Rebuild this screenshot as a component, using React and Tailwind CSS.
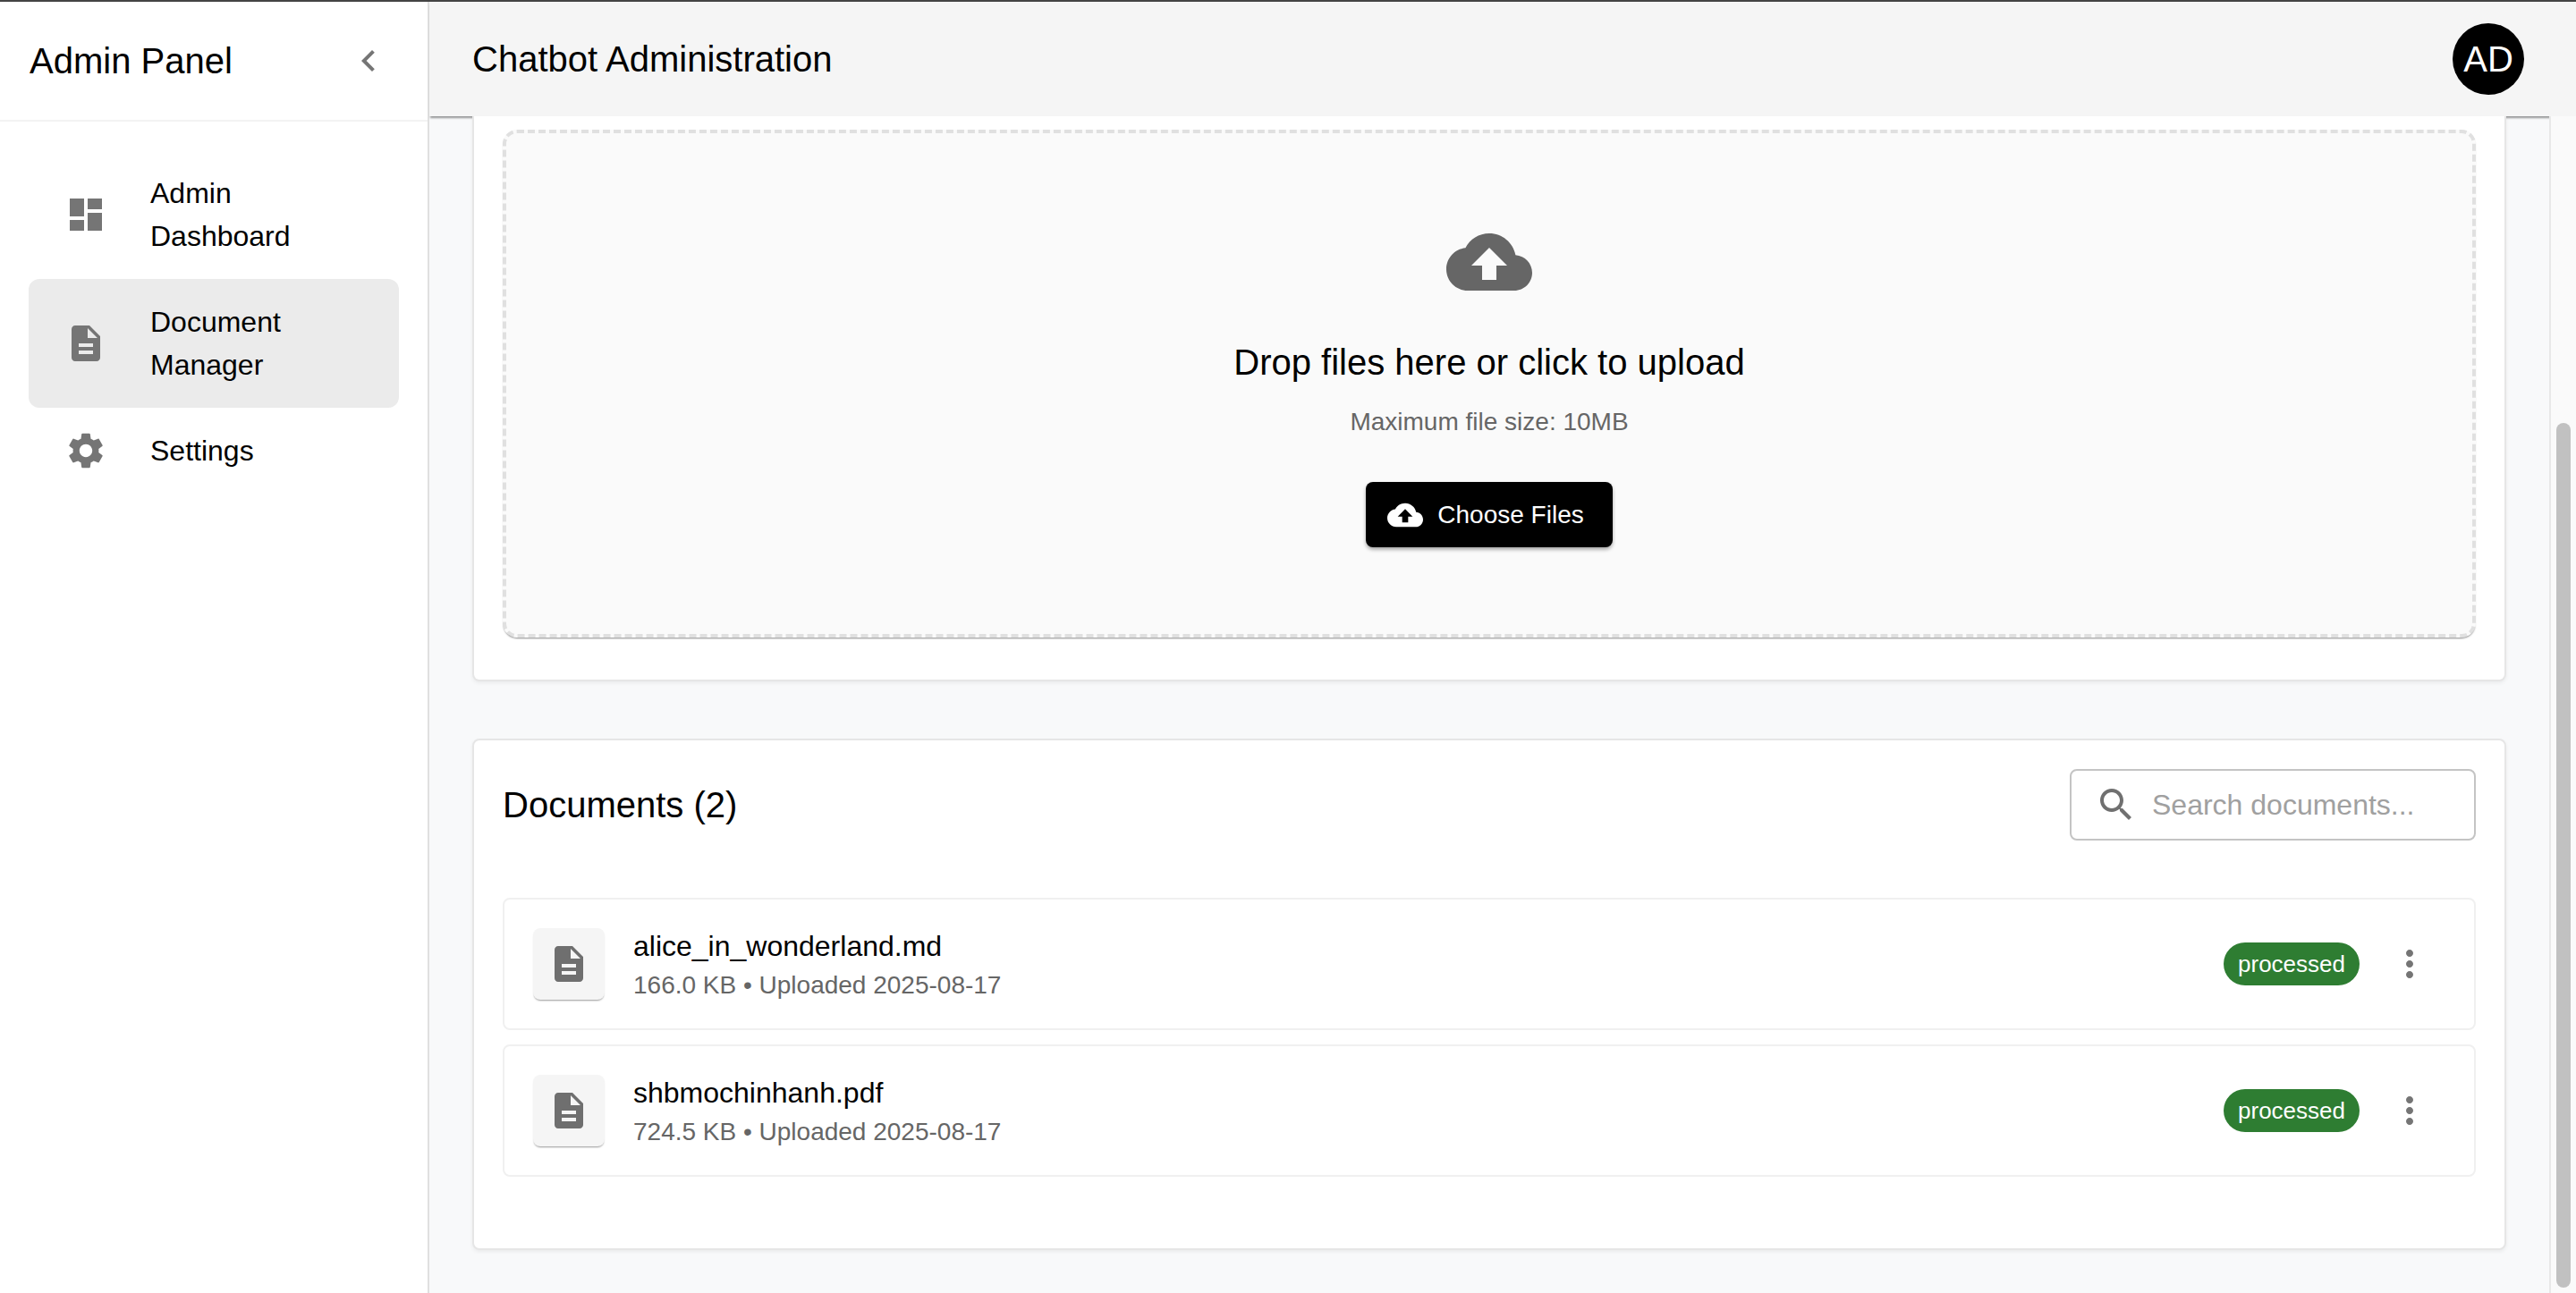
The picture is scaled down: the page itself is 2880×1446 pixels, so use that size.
const icons = {
  dashboard: 'M3 13h8V3H3zm0 8h8v-6H3zm10 0h8V11h-8zm0-18v6h8V3z',
  description: 'M14 2H6c-1.1 0-1.99.9-1.99 2L4 20c0 1.1.89 2 1.99 2H18c1.1 0 2-.9 2-2V8zm2 16H8v-2h8zm0-4H8v-2h8zm-3-5V3.5L18.5 9z',
  settings: 'M19.14 12.94c.04-.3.06-.61.06-.94 0-.32-.02-.64-.07-.94l2.03-1.58c.18-.14.23-.41.12-.61l-1.92-3.32c-.12-.22-.37-.29-.59-.22l-2.39.96c-.5-.38-1.03-.7-1.62-.94l-.36-2.54c-.04-.24-.24-.41-.48-.41h-3.84c-.24 0-.43.17-.47.41l-.36 2.54c-.59.24-1.13.57-1.62.94l-2.39-.96c-.22-.08-.47 0-.59.22L2.74 8.87c-.12.21-.08.47.12.61l2.03 1.58c-.05.3-.09.63-.09.94s.02.64.07.94l-2.03 1.58c-.18.14-.23.41-.12.61l1.92 3.32c.12.22.37.29.59.22l2.39-.96c.5.38 1.03.7 1.62.94l.36 2.54c.05.24.24.41.48.41h3.84c.24 0 .44-.17.47-.41l.36-2.54c.59-.24 1.13-.56 1.62-.94l2.39.96c.22.08.47 0 .59-.22l1.92-3.32c.12-.22.07-.47-.12-.61zM12 15.6c-1.98 0-3.6-1.62-3.6-3.6s1.62-3.6 3.6-3.6 3.6 1.62 3.6 3.6-1.62 3.6-3.6 3.6',
  chevron: 'M15.41 7.41 14 6l-6 6 6 6 1.41-1.41L10.83 12z',
  search: 'M15.5 14h-.79l-.28-.27C15.41 12.59 16 11.11 16 9.5 16 5.91 13.09 3 9.5 3S3 5.91 3 9.5 5.91 16 9.5 16c1.61 0 3.09-.59 4.23-1.57l.27.28v.79l5 4.99L20.49 19zm-6 0C7.01 14 5 11.99 5 9.5S7.01 5 9.5 5 14 7.01 14 9.5 11.99 14 9.5 14',
  more: 'M12 8c1.1 0 2-.9 2-2s-.9-2-2-2-2 .9-2 2 .9 2 2 2m0 2c-1.1 0-2 .9-2 2s.9 2 2 2 2-.9 2-2-.9-2-2-2m0 6c-1.1 0-2 .9-2 2s.9 2 2 2 2-.9 2-2-.9-2-2-2',
  upload: 'M19.35 10.04C18.67 6.59 15.64 4 12 4 9.11 4 6.6 5.64 5.35 8.04 2.34 8.36 0 10.91 0 14c0 3.31 2.69 6 6 6h13c2.76 0 5-2.24 5-5 0-2.64-2.05-4.78-4.65-4.96M14 13v4h-4v-4H7l5-5 5 5z',
}

function Icon({ name, className }) {
  return (
    <svg viewBox="0 0 24 24" fill="currentColor" className={className}>
      <path d={icons[name]} />
    </svg>
  )
}

const navItems = [
  { icon: 'dashboard', label: 'Admin Dashboard' },
  { icon: 'description', label: 'Document Manager', active: true },
  { icon: 'settings', label: 'Settings' },
]

const documents = [
  { name: 'alice_in_wonderland.md', meta: '166.0 KB • Uploaded 2025-08-17' },
  { name: 'shbmochinhanh.pdf', meta: '724.5 KB • Uploaded 2025-08-17' },
]

function Sidebar() {
  return (
    <aside className="w-[480px] shrink-0 bg-white border-r-2 border-[#e0e0e0] flex flex-col">
      <div className="h-[134px] shrink-0 border-b-2 border-[#f3f3f3] pl-[33px] pr-[42px] flex items-center justify-between">
        <span className="text-[40px] leading-[60px] text-black">Admin Panel</span>
        <Icon name="chevron" className="w-12 h-12 text-[#757575]" />
      </div>
      <nav className="pt-8 px-8">
        {navItems.map((item) => (
          <div
            key={item.label}
            className={`flex items-center pl-10 pr-12 py-6 rounded-xl ${item.active ? 'bg-[#ebebeb]' : ''}`}
          >
            <Icon name={item.icon} className="w-12 h-12 shrink-0 text-[#757575]" />
            <span className="ml-12 text-[32px] leading-[48px] text-black">{item.label}</span>
          </div>
        ))}
      </nav>
    </aside>
  )
}

function UploadCard() {
  return (
    <section className="relative bg-white border-x-2 border-b-2 border-[#e6e6e6] rounded-b-lg pt-[15px] px-8 pb-[47px] shadow-[0_2px_4px_rgba(0,0,0,0.06)]">
      <div className="border-4 border-dashed border-[#e0e0e0] rounded-2xl bg-[#fafafa] pt-24 pb-[97px] flex flex-col items-center shadow-[0_2px_2px_-1px_rgba(0,0,0,0.45)]">
        <Icon name="upload" className="w-24 h-24 text-[#666666]" />
        <h2 className="mt-8 text-[40px] leading-[64px] text-black">Drop files here or click to upload</h2>
        <p className="mt-[15px] text-[28px] leading-[40px] text-[#666666]">Maximum file size: 10MB</p>
        <button className="mt-[47px] h-[73px] pl-6 pr-8 flex items-center rounded-lg bg-black text-white text-[28px] shadow-[0_3px_5px_-1px_rgba(0,0,0,0.3),0_2px_4px_rgba(0,0,0,0.14)]">
          <Icon name="upload" className="w-10 h-10 mr-4" />
          Choose Files
        </button>
      </div>
    </section>
  )
}

function DocumentRow({ doc }) {
  return (
    <div className="border-2 border-[#f0f0f0] rounded-lg px-8 py-7 flex items-center">
      <div className="w-20 h-20 shrink-0 rounded-lg bg-[#f5f5f5] flex items-center justify-center shadow-[0_2px_2px_-1px_rgba(0,0,0,0.4)]">
        <Icon name="description" className="w-12 h-12 text-[#6f6f6f]" />
      </div>
      <div className="ml-8 flex-1">
        <div className="text-[32px] leading-[48px] text-black">{doc.name}</div>
        <div className="text-[28px] leading-[40px] text-[#666666]">{doc.meta}</div>
      </div>
      <span className="h-12 px-4 rounded-full bg-[#2e7d32] text-white text-[26px] flex items-center">processed</span>
      <div className="ml-4 w-20 h-20 flex items-center justify-center">
        <Icon name="more" className="w-12 h-12 text-[#757575]" />
      </div>
    </div>
  )
}

function DocumentsCard() {
  return (
    <section className="relative mt-16 bg-white border-2 border-[#e6e6e6] rounded-lg pt-8 px-8 pb-20 shadow-[0_2px_4px_rgba(0,0,0,0.06)]">
      <div className="flex items-center justify-between">
        <h2 className="text-[40px] leading-[60px] text-black">Documents (2)</h2>
        <label className="w-[454px] h-20 border-2 border-[#c4c4c4] rounded-lg pl-[26px] flex items-center">
          <Icon name="search" className="w-12 h-12 shrink-0 text-[#707070]" />
          <input
            placeholder="Search documents..."
            className="ml-4 w-[340px] text-[32px] outline-none bg-transparent placeholder:text-[#a0a0a0] placeholder:opacity-100"
          />
        </label>
      </div>
      <div className="mt-16 flex flex-col gap-4">
        {documents.map((doc) => (
          <DocumentRow key={doc.name} doc={doc} />
        ))}
      </div>
    </section>
  )
}

export default function App() {
  return (
    <div className="h-screen flex flex-col overflow-hidden bg-white border-t-2 border-[#444444] font-['Liberation_Sans',Arial,sans-serif]">
      <div className="flex-1 min-h-0 flex">
        <Sidebar />
        <div className="flex-1 min-w-0 flex flex-col bg-[#f8f9fa]">
          <header className="relative h-[128px] shrink-0 bg-[#f5f5f5] pl-12 pr-[58px] flex items-center justify-between shadow-[0_3px_2px_-1px_rgba(0,0,0,0.4)]">
            <h1 className="text-[40px] leading-[60px] text-black">Chatbot Administration</h1>
            <div className="w-20 h-20 rounded-full bg-black text-white text-[40px] flex items-center justify-center">AD</div>
          </header>
          <div className="flex-1 min-h-0 flex">
            <main className="flex-1 min-w-0 px-12">
              <UploadCard />
              <DocumentsCard />
            </main>
            <div className="relative w-[30px] shrink-0 bg-[#fafafa] border-l-2 border-[#e8e8e8] pl-[6px] pr-[6px] pt-[343px] pb-[6px]">
              <div className="h-full w-4 rounded-full bg-[#c1c1c1]" />
            </div>
          </div>
        </div>
      </div>
    </div>
  )
}
